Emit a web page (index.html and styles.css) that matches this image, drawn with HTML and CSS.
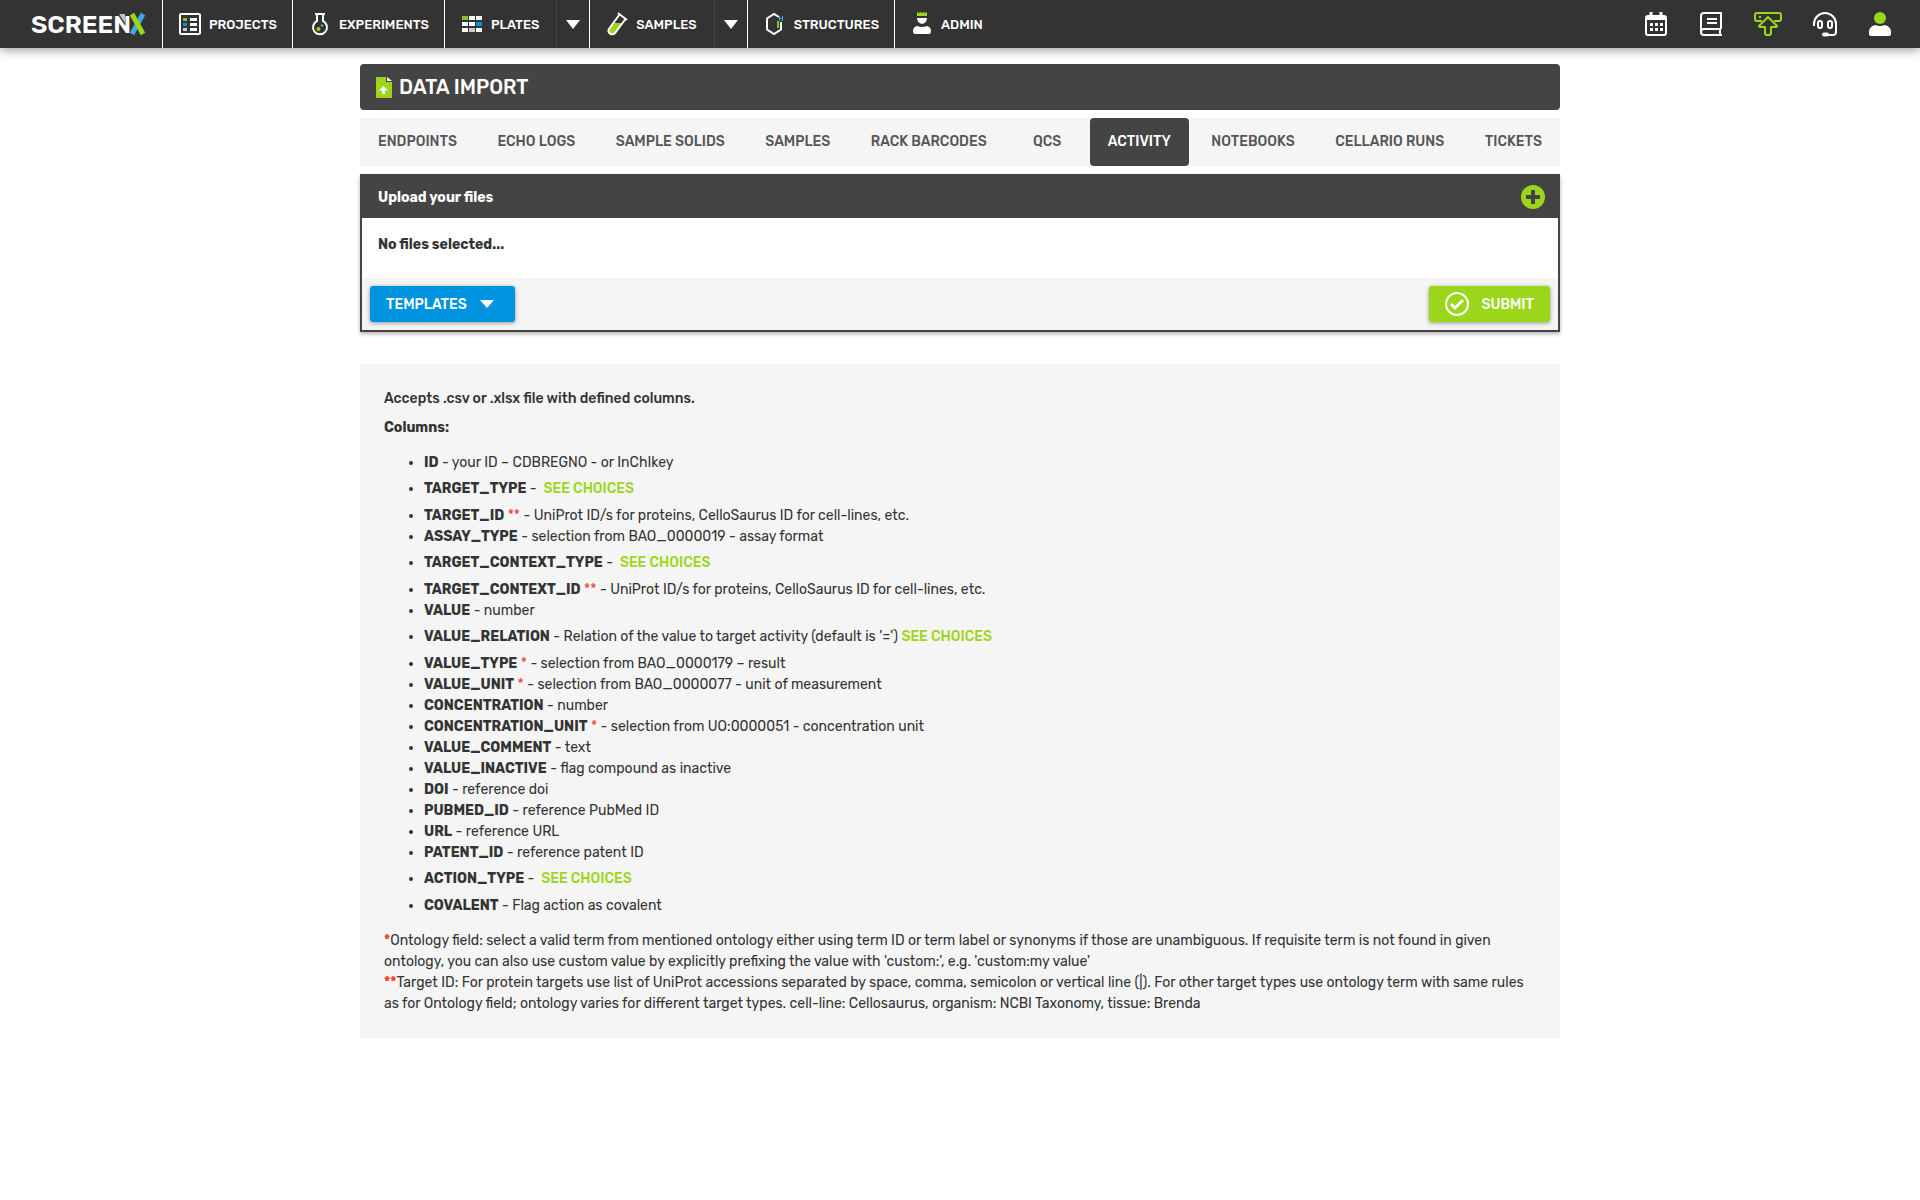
FILE: index.html
```html
<!DOCTYPE html>
<html lang="en">
<head>
    <meta charset="UTF-8">
    <meta name="viewport" content="width=device-width, initial-scale=1.0">
    <title>ScreenX - Data Import</title>
    <link rel="stylesheet" href="styles.css">
</head>
<body>
    <header class="topbar">
        <a class="logo" href="#" aria-label="ScreenX">
            <span class="logo-text">SCREEN</span>
            <svg class="logo-mark" width="28" height="24" viewBox="0 0 28 24">
                <path d="M1 2h6v9z" fill="#c4c4c4"/>
                <path d="M25 2L14 22" stroke="#3ea9e8" stroke-width="5"/>
                <path d="M14 2L25 22" stroke="#9bd61b" stroke-width="5"/>
            </svg>
        </a>

        <!-- Main navigation -->
        <nav class="main-nav">
            <div class="nav-item">
                <a class="nav-link" href="#">
                    <svg class="icon" viewBox="0 0 24 24">
                        <rect x="2" y="2" width="20" height="20" rx="1" fill="none" stroke="#fff" stroke-width="2"/>
                        <path d="M5 6h4v3H5z" fill="#84c225"/>
                        <path d="M5 11h4v3H5z" fill="#0093df"/>
                        <path d="M5 16h4v3H5z" fill="#ccc"/>
                        <path d="M12 6h7v3h-7zM12 11h7v3h-7zM12 16h7v3h-7z" fill="#fff"/>
                    </svg>
                    PROJECTS
                </a>
            </div>
            <div class="nav-item">
                <a class="nav-link" href="#">
                    <svg class="icon" viewBox="0 0 24 24">
                        <path d="M7 2h10M9 2v7a7 7 0 1 0 6 0V2" fill="none" stroke="#fff" stroke-width="2"/>
                        <circle cx="10.500" cy="17" r="2" fill="#9bd61b"/>
                        <circle cx="14" cy="13.500" r="1.300" fill="#3ea9e8"/>
                    </svg>
                    EXPERIMENTS
                </a>
            </div>
            <div class="nav-item">
                <a class="nav-link has-menu" href="#">
                    <svg class="icon" viewBox="0 0 24 24">
                        <path d="M2 4h6v4H2z" fill="#84c225"/>
                        <path d="M9 4h6v4H9zM16 4h6v4h-6zM2 10h6v4H2zM9 10h6v4H9zM2 16h6v4H2zM16 16h6v4h-6z" fill="#fff"/>
                        <path d="M16 10h6v4h-6z" fill="#0093df"/>
                        <path d="M9 16h6v4H9z" fill="#ccc"/>
                    </svg>
                    PLATES
                </a>
                <button class="nav-caret" type="button" aria-label="More plates">
                    <svg width="14" height="10" viewBox="0 0 14 10"><path d="M0 1h14L7 10z" fill="#fff"/></svg>
                </button>
            </div>
            <div class="nav-item">
                <a class="nav-link has-menu" href="#">
                    <svg class="icon" viewBox="0 0 24 24">
                        <path d="M7 11h11l-8 11q-3 2-5 0t-1-5z" fill="#9bd61b"/>
                        <path d="M13 1l9 7M14.500 2.500L4 17c-2 4 3 7 6 4L20.500 7" fill="none" stroke="#fff" stroke-width="2"/>
                    </svg>
                    SAMPLES
                </a>
                <button class="nav-caret" type="button" aria-label="More samples">
                    <svg width="14" height="10" viewBox="0 0 14 10"><path d="M0 1h14L7 10z" fill="#fff"/></svg>
                </button>
            </div>
            <div class="nav-item">
                <a class="nav-link" href="#">
                    <svg class="icon" viewBox="0 0 24 24">
                        <path d="M16 5l-5-3-7 4.500v11L11 22l7-4.500V10" fill="none" stroke="#fff" stroke-width="2"/>
                        <path d="M15 9v7" stroke="#84c225" stroke-width="2"/>
                        <path d="M16.500 4v5M19.500 4v5M16.500 6.500h3" stroke="#3ea9e8" fill="none"/>
                    </svg>
                    STRUCTURES
                </a>
            </div>
            <div class="nav-item">
                <a class="nav-link" href="#">
                    <svg class="icon" viewBox="0 0 24 24">
                        <path d="M7 0l2 1 1.500-1 1.500 1 1.500-1 1.500 1 2-1v4H7z" fill="#9bd61b"/>
                        <path d="M7 6h10q0 5-5 6-5-1-5-6zM5 22q-2 0-2-3 0-4 4-5 5 2 10 0 4 1 4 5 0 3-2 3z" fill="#fff"/>
                    </svg>
                    ADMIN
                </a>
            </div>
        </nav>

        <!-- User tools -->
        <nav class="tools">
            <a href="#" aria-label="Calendar">
                <svg width="24" height="26" viewBox="0 0 24 26" fill="none" stroke="#fff">
                    <rect x="2" y="5" width="20" height="19" rx="2" stroke-width="2"/>
                    <path d="M2 7h20" stroke-width="4"/>
                    <path d="M7 1v5M17 1v5" stroke-width="3"/>
                    <path d="M6 13.500h3m2 0h3m2 0h3M6 18.500h3m2 0h3m2 0h3" stroke-width="3"/>
                </svg>
            </a>
            <a href="#" aria-label="Notebook">
                <svg width="26" height="26" viewBox="0 0 26 26" fill="none" stroke="#fff" stroke-width="2">
                    <path d="M23 18V2H6Q3 2 3 5v16q0 3 3 3h18M3 21q0-3 3-3h17M22 18v6M9 8h10M9 12h10"/>
                </svg>
            </a>
            <a href="#" aria-label="Data import">
                <svg width="28" height="26" viewBox="0 0 28 26" fill="none" stroke="#9bd61b" stroke-width="2" stroke-linejoin="round">
                    <path d="M8 10H3q-2 0-2-2V4q0-2 2-2h22q2 0 2 2v4q0 2-2 2h-5"/>
                    <path d="M14 6l-9 9q0 1 1 1h5v6q0 2 2 2h2q2 0 2-2v-6h5q1 0 1-1z"/>
                    <circle cx="6" cy="6" r="1.200" fill="#9bd61b" stroke="none"/>
                </svg>
            </a>
            <a href="#" aria-label="Support">
                <svg width="26" height="26" viewBox="0 0 26 26" fill="none" stroke="#fff" stroke-width="2">
                    <path d="M2 15v-2a11 11 0 0 1 22 0v8q0 3-3 3h-9"/>
                    <rect x="6" y="10" width="4" height="7" rx="2"/>
                    <rect x="16" y="10" width="4" height="7" rx="2"/>
                    <path d="M12 23.500h3" stroke-width="4" stroke-linecap="round"/>
                </svg>
            </a>
            <a href="#" aria-label="Profile">
                <svg width="24" height="26" viewBox="0 0 24 26">
                    <circle cx="12" cy="7" r="6" fill="#9bd61b"/>
                    <path d="M1 23q-1-7 6-9 5 2 10 0 7 2 6 9 0 2-2 2H3q-2 0-2-2z" fill="#fff"/>
                </svg>
            </a>
        </nav>
    </header>

    <main class="container">
        <h1 class="page-title">
            <svg width="16" height="21" viewBox="0 0 16 21">
                <path d="M1 0h9v5h6v15q0 1-1 1H1q-1 0-1-1V1q0-1 1-1z" fill="#9bd61b"/>
                <path d="M11 0l5 4h-5zM7.500 9l4.500 4.500H9V17H6v-3.500H3z" fill="#fff"/>
            </svg>
            DATA IMPORT
        </h1>

        <nav class="tabs">
            <a class="tab" href="#">ENDPOINTS</a>
            <a class="tab" href="#">ECHO LOGS</a>
            <a class="tab" href="#">SAMPLE SOLIDS</a>
            <a class="tab" href="#">SAMPLES</a>
            <a class="tab" href="#">RACK BARCODES</a>
            <a class="tab" href="#">QCS</a>
            <a class="tab active" href="#">ACTIVITY</a>
            <a class="tab" href="#">NOTEBOOKS</a>
            <a class="tab" href="#">CELLARIO RUNS</a>
            <a class="tab" href="#">TICKETS</a>
        </nav>

        <!-- Upload panel -->
        <section class="upload">
            <div class="upload-header">
                <span>Upload your files</span>
                <button class="add-button" type="button" aria-label="Add files">
                    <svg width="24" height="24" viewBox="0 0 24 24">
                        <circle cx="12" cy="12" r="12" fill="#9bd61b"/>
                        <path d="M12 5v14M5 12h14" stroke="#444" stroke-width="4"/>
                    </svg>
                </button>
            </div>
            <div class="upload-body">No files selected...</div>
            <div class="upload-footer">
                <button class="button blue" type="button">
                    TEMPLATES
                    <svg width="14" height="8" viewBox="0 0 14 8"><path d="M0 0h14L7 8z" fill="#fff"/></svg>
                </button>
                <button class="button green" type="button">
                    <svg width="24" height="24" viewBox="0 0 24 24" fill="none" stroke="#fff">
                        <circle cx="12" cy="12" r="11" stroke-width="2"/>
                        <path d="M6 12l4 4 8-8" stroke-width="3"/>
                    </svg>
                    SUBMIT
                </button>
            </div>
        </section>

        <!-- Format description -->
        <section class="info">
            <p class="accepts">Accepts .csv or .xlsx file with defined columns.</p>
            <p class="columns-title">Columns:</p>
            <ul class="columns">
                <li><b>ID</b> - your ID – CDBREGNO - or InChIkey</li>
                <li class="tall"><b>TARGET_TYPE</b> - &nbsp;<a class="choices" href="#">SEE CHOICES</a></li>
                <li><b>TARGET_ID</b> <span class="red">**</span> - UniProt ID/s for proteins, CelloSaurus ID for cell-lines, etc.</li>
                <li><b>ASSAY_TYPE</b> - selection from BAO_0000019 - assay format</li>
                <li class="tall"><b>TARGET_CONTEXT_TYPE</b> - &nbsp;<a class="choices" href="#">SEE CHOICES</a></li>
                <li><b>TARGET_CONTEXT_ID</b> <span class="red">**</span> - UniProt ID/s for proteins, CelloSaurus ID for cell-lines, etc.</li>
                <li><b>VALUE</b> - number</li>
                <li class="tall"><b>VALUE_RELATION</b> - Relation of the value to target activity (default is '=') <a class="choices" href="#">SEE CHOICES</a></li>
                <li><b>VALUE_TYPE</b> <span class="red">*</span> - selection from BAO_0000179 – result</li>
                <li><b>VALUE_UNIT</b> <span class="red">*</span> - selection from BAO_0000077 - unit of measurement</li>
                <li><b>CONCENTRATION</b> - number</li>
                <li><b>CONCENTRATION_UNIT</b> <span class="red">*</span> - selection from UO:0000051 - concentration unit</li>
                <li><b>VALUE_COMMENT</b> - text</li>
                <li><b>VALUE_INACTIVE</b> - flag compound as inactive</li>
                <li><b>DOI</b> - reference doi</li>
                <li><b>PUBMED_ID</b> - reference PubMed ID</li>
                <li><b>URL</b> - reference URL</li>
                <li><b>PATENT_ID</b> - reference patent ID</li>
                <li class="tall"><b>ACTION_TYPE</b> - &nbsp;<a class="choices" href="#">SEE CHOICES</a></li>
                <li><b>COVALENT</b> - Flag action as covalent</li>
            </ul>
            <p class="note"><b class="red">*</b>Ontology field: select a valid term from mentioned ontology either using term ID or term label or synonyms if those are unambiguous. If requisite term is not found in given ontology, you can also use custom value by explicitly prefixing the value with 'custom:', e.g. 'custom:my value'</p>
            <p class="note"><b class="red">**</b>Target ID: For protein targets use list of UniProt accessions separated by space, comma, semicolon or vertical line (|). For other target types use ontology term with same rules as for Ontology field; ontology varies for different target types. cell-line: Cellosaurus, organism: NCBI Taxonomy, tissue: Brenda</p>
        </section>
    </main>
</body>
</html>
```

FILE: styles.css
```css
* {
    box-sizing: border-box;
}

body {
    margin: 0;
    font-family: Rubik, Roboto, sans-serif;
    font-size: 14px;
    line-height: 21px;
    color: #333;
    background-color: #fff;
}

a {
    color: inherit;
    text-decoration: none;
}

p {
    margin: 0;
}

svg {
    display: block;
    flex: none;
}

button {
    border: none;
    padding: 0;
    font: inherit;
    color: inherit;
    background: none;
    cursor: pointer;
}

/* Top bar */
.topbar {
    display: flex;
    height: 48px;
    color: #fff;
    background-color: #333;
    box-shadow: 0 2px 10px rgba(0, 0, 0, 0.4);
}

.logo {
    display: flex;
    align-items: center;
    padding: 0 16px 0 31px;
}

.logo-text {
    font-size: 25px;
    font-weight: 600;
}

.logo-mark {
    margin-left: -13px;
}

.main-nav {
    display: flex;
}

.nav-item {
    display: flex;
    border-left: 1px solid #fff;
}

.nav-link {
    display: flex;
    align-items: center;
    gap: 7px;
    padding: 0 15px;
    font-size: 13px;
    font-weight: 500;
}

.nav-link.has-menu {
    padding-right: 17px;
}

.icon {
    width: 24px;
    height: 24px;
}

.nav-caret {
    display: flex;
    align-items: center;
    justify-content: center;
    width: 33px;
    border-left: 1px solid #444;
}

.tools {
    display: flex;
    align-items: center;
    gap: 30px;
    margin-left: auto;
    padding-right: 28px;
}

/* Page */
.container {
    display: flex;
    flex-direction: column;
    gap: 8px;
    max-width: 1200px;
    margin: 16px auto;
}

.page-title {
    display: flex;
    align-items: center;
    gap: 7px;
    height: 46px;
    margin: 0;
    padding: 0 16px;
    font-size: 20px;
    font-weight: 500;
    color: #fff;
    background-color: #444;
    border-radius: 4px;
}

.tabs {
    display: flex;
    justify-content: space-between;
    background-color: #f5f5f5;
}

.tab {
    min-width: 76px;
    padding: 0 18px;
    font-weight: 500;
    line-height: 48px;
    text-align: center;
    white-space: nowrap;
    color: #555;
}

.tab.active {
    color: #fff;
    background-color: #444;
    border-radius: 4px;
}

/* Upload panel */
.upload {
    border: 2px solid #444;
    box-shadow: 0 2px 4px rgba(0, 0, 0, 0.3);
}

.upload-header {
    display: flex;
    align-items: center;
    justify-content: space-between;
    height: 42px;
    padding: 0 13px 0 16px;
    font-weight: 700;
    color: #fff;
    background-color: #444;
}

.upload-body {
    height: 60px;
    padding: 16px;
    font-weight: 700;
}

.upload-footer {
    display: flex;
    justify-content: space-between;
    padding: 8px;
    background-color: #f5f5f5;
}

.button {
    display: flex;
    align-items: center;
    gap: 13px;
    height: 36px;
    padding: 0 16px;
    font-weight: 500;
    color: #fff;
    border-radius: 3px;
    box-shadow: 0 1px 4px rgba(0, 0, 0, 0.4);
}

.button.blue {
    padding-right: 21px;
    background-color: #0093df;
}

.button.green {
    gap: 12px;
    background-color: #9bd61b;
}

/* Format description */
.info {
    margin-top: 24px;
    padding: 24px;
    background-color: #f5f5f5;
}

.accepts {
    font-weight: 500;
}

.columns-title {
    margin-top: 8px;
    font-weight: 700;
}

.columns {
    margin: 14px 0;
    padding-left: 40px;
}

.tall {
    line-height: 32px;
}

.choices {
    font-weight: 500;
    color: #9bd61b;
}

.red {
    color: #f44336;
}
```
